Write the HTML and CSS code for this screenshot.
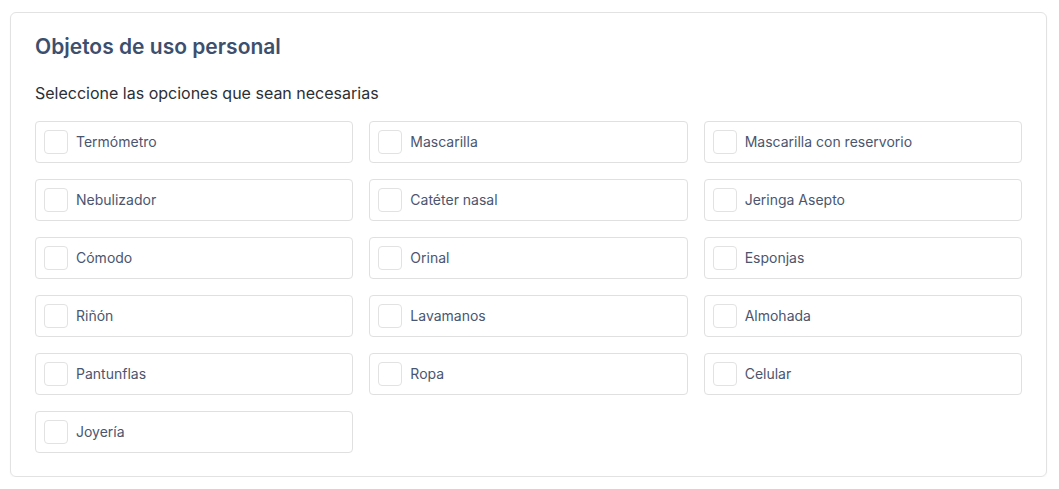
FILE: index.html
```html
<!DOCTYPE html>
<html lang="es">
<head>
<meta charset="utf-8">
<title>Objetos de uso personal</title>
<link rel="stylesheet" href="styles.css">
</head>
<body>
<section class="card">
  <h2 class="title">Objetos de uso personal</h2>
  <p class="subtitle">Seleccione las opciones que sean necesarias</p>
  <div class="grid">
    <label class="option"><span class="box"></span><span class="label">Termómetro</span></label>
    <label class="option"><span class="box"></span><span class="label">Mascarilla</span></label>
    <label class="option"><span class="box"></span><span class="label">Mascarilla con reservorio</span></label>
    <label class="option"><span class="box"></span><span class="label">Nebulizador</span></label>
    <label class="option"><span class="box"></span><span class="label">Catéter nasal</span></label>
    <label class="option"><span class="box"></span><span class="label">Jeringa Asepto</span></label>
    <label class="option"><span class="box"></span><span class="label">Cómodo</span></label>
    <label class="option"><span class="box"></span><span class="label">Orinal</span></label>
    <label class="option"><span class="box"></span><span class="label">Esponjas</span></label>
    <label class="option"><span class="box"></span><span class="label">Riñón</span></label>
    <label class="option"><span class="box"></span><span class="label">Lavamanos</span></label>
    <label class="option"><span class="box"></span><span class="label">Almohada</span></label>
    <label class="option"><span class="box"></span><span class="label">Pantunflas</span></label>
    <label class="option"><span class="box"></span><span class="label">Ropa</span></label>
    <label class="option"><span class="box"></span><span class="label">Celular</span></label>
    <label class="option"><span class="box"></span><span class="label">Joyería</span></label>
  </div>
</section>
</body>
</html>
```

FILE: styles.css
```css
* { box-sizing: border-box; }
body {
  margin: 0;
  padding: 12px 12px 0 10px;
  background: #ffffff;
  font-family: Inter, "Noto Sans", sans-serif;
}
.card {
  width: 1037px;
  border: 1px solid #e2e2e2;
  border-radius: 6px;
  padding: 22px 24px 23px 24px;
  box-shadow: 0 1px 2px rgba(0,0,0,0.04);
}
.title {
  margin: 0;
  font-size: 21px;
  font-weight: 600;
  line-height: 24px;
  color: #3d4f6e;
}
.subtitle {
  margin: 24px 0 0 0;
  font-size: 16px;
  line-height: 20px;
  color: #2b2f36;
}
.grid {
  margin-top: 18px;
  display: grid;
  grid-template-columns: repeat(3, 1fr);
  gap: 16px;
}
.option {
  display: flex;
  align-items: center;
  height: 42px;
  padding: 0 8px 1px 8px;
  border: 1px solid #e0e0e0;
  border-radius: 4px;
  gap: 8px;
}
.box {
  width: 24px;
  height: 24px;
  border: 1px solid #e2e2e2;
  border-radius: 4px;
  flex: none;
}
.label {
  font-size: 14px;
  color: #4a5670;
}
```
